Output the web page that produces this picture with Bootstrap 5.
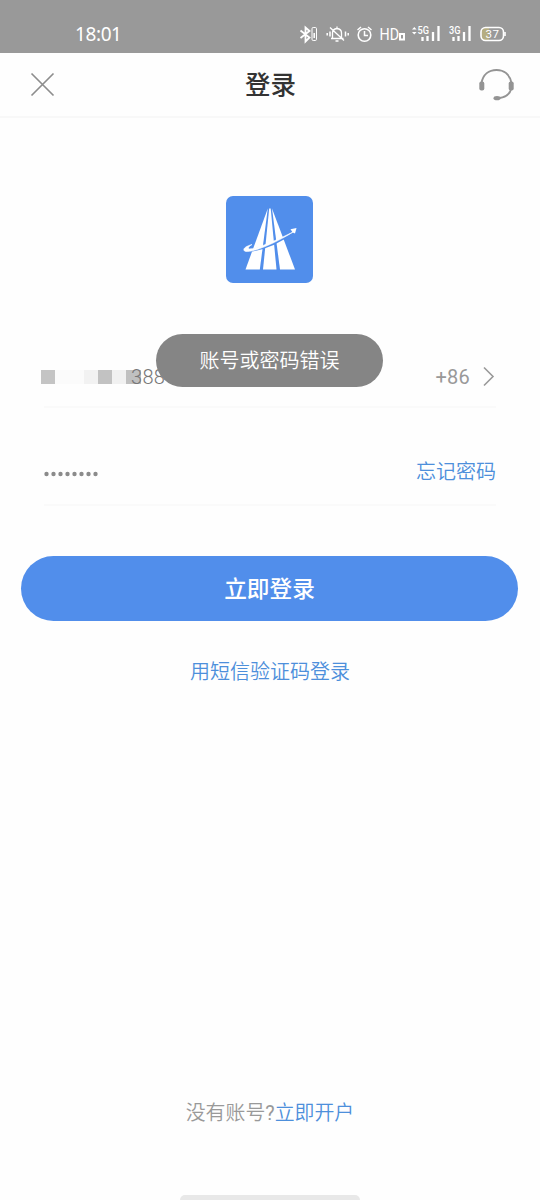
<!DOCTYPE html>
<html lang="zh-CN">
<head>
<meta charset="utf-8">
<meta name="viewport" content="width=device-width, initial-scale=1">
<title>登录</title>
<link href="https://cdn.jsdelivr.net/npm/bootstrap@5.3.0/dist/css/bootstrap.min.css" rel="stylesheet">
<style>
body{font-family:Roboto,"Noto Sans CJK SC",sans-serif;font-size:20px;font-weight:350;line-height:30px;color:#999;background:#fefefe}
.screen{height:1200px;overflow:hidden}
.statusbar{height:53px;background:#999;color:#fff;padding:15px 34px 0 75px}
.clock{font-family:"Noto Sans",Roboto,sans-serif;font-size:19px;font-weight:400;line-height:38px;letter-spacing:-.4px}
.status-icons{height:38px}
.topbar{height:65px;border-bottom:2px solid #f8f8f8;padding:0 25px 0 30px}
.topbar h1{font-size:25.5px;font-weight:500;line-height:38px;color:#333;margin-right:-10px}
.brand-tile{width:87px;height:87px;margin:78px 1px 0 0}
.login-form{margin-top:63px;padding:0 44px}
.field{height:62px;border-bottom:2px solid #fafafa}
.field + .field{height:98px;padding-top:49px}
.dial-code{font-weight:400;letter-spacing:.2px}
.link-blue{color:#4d8fdb;text-decoration:none}
.mask{margin-left:-3px;width:100px;height:14px;background:linear-gradient(90deg,#c4c4c4 14px,#fbfbfb 14px 43px,#f2f2f2 43px 57px,#c2c2c2 57px 71px,#f1f1f1 71px 85px,#c0c0c0 85px)}
.digits{margin-left:-10px;font-weight:300;color:#777;letter-spacing:.3px}
.notice{left:156px;top:334px;width:227px;height:53px;background:#858585;color:#fff;z-index:2}
.login-btn{height:65px;margin:50px 22px 0 21px;padding-top:8px;font-size:22.7px;font-weight:500;line-height:32px;background:#518eeb;color:#fff;border:0}
.sms{margin-top:36px}
.signup{margin-bottom:66px;font-size:19.9px}
.home-bar{width:180px;height:5px;background:#e8e8e8}
</style>
</head>
<body>
<div class="screen d-flex flex-column position-relative">
  <header class="statusbar d-flex justify-content-between">
    <span class="clock">18:01</span>
    <div class="status-icons d-flex align-items-center">
      <svg width="207" height="20" viewBox="299 24 207 20" fill="none" stroke="#fff" stroke-width="1.6">
        <path d="M300.500 30.500l9 7-4 4V27.500l4 3.500-9 7" stroke-width="1.800"/>
        <rect x="312" y="27.500" width="4.500" height="13" rx="1.200" stroke-width="1"/><path d="M314.200 33v5" stroke-width="1.500"/>
        <path d="M331 38.500h12.500M332.500 38v-5q0-4 4.500-4.500 4.500.500 4.500 4.500v5M337 26.500v2M335.500 41h3M330 27.500l14 13" stroke-width="1.300"/>
        <path d="M330 31.500v5M345.500 31.500v5M327.200 33v2.500M348.200 33v2.500" stroke-width="1.500"/>
        <circle cx="364.500" cy="35" r="6.300" stroke-width="1.600"/><path d="M364.500 31v4.500h3.500M357.500 30l3.500-3M371.500 30l-3.500-3" stroke-width="1.500"/>
        <text x="379.500" y="40" font-size="16" font-weight="400" textLength="19.500" lengthAdjust="spacingAndGlyphs" fill="#fff" stroke="none">HD</text>
        <rect x="400" y="34" width="4" height="5.500" stroke-width="2"/>
        <path d="M412 29.500l2.300-2.500 2.300 2.500zM412 32l2.300 2.500 2.300-2.500z" fill="#fff" stroke="none"/>
        <text x="417.500" y="33.500" font-size="10" font-weight="500" textLength="11.500" lengthAdjust="spacingAndGlyphs" fill="#fff" stroke="none">5G</text>
        <path d="M422.500 41v-4M427.500 41v-5M433 41v-9M438.500 41V26" stroke-width="2.300"/>
        <text x="449" y="33.500" font-size="10" font-weight="500" textLength="11.500" lengthAdjust="spacingAndGlyphs" fill="#fff" stroke="none">3G</text>
        <path d="M453.500 41v-4M458.500 41v-5M464 41v-9M469.500 41V26" stroke-width="2.300"/>
        <path d="M485 28h4v12h-4q-3.500 0-3.500-3.500v-5q0-3.500 3.500-3.500z" fill="#b5ad82" stroke="none"/>
        <rect x="481" y="27.500" width="22.500" height="13" rx="4.500"/><path d="M505 32v4"/>
        <text x="485.500" y="38" font-size="11.500" font-weight="400" textLength="13.500" fill="#fff" stroke="none">37</text>
      </svg>
    </div>
  </header>

  <nav class="topbar d-flex align-items-center justify-content-between">
    <svg width="25" height="25" viewBox="0 0 25 25" fill="none" stroke="#8d8d8d" stroke-width="1.700" role="img" aria-label="关闭"><path d="M1.500 1.500l22 22M23.500 1.500l-22 22"/></svg>
    <h1 class="m-0 ms-auto me-auto ps-2">登录</h1>
    <svg width="37" height="34" viewBox="0 0 37 34" fill="none" stroke="#949494" role="img" aria-label="客服">
      <path d="M3.500 15C5 6.500 11 2 18.500 2S32 6.500 33.500 15M33.500 20C32 26 27.500 29.800 20 30.300" stroke-width="1.900"/>
      <rect x="1.300" y="13.500" width="5" height="9" rx="2" fill="#949494" stroke="none"/>
      <rect x="30.700" y="13.500" width="5" height="9" rx="2" fill="#949494" stroke="none"/>
      <ellipse cx="19" cy="30.200" rx="3.500" ry="2.100" fill="#949494" stroke="none"/>
    </svg>
  </nav>

  <svg class="brand-tile align-self-center" viewBox="0 0 87 87" role="img" aria-label="标志">
    <rect width="87" height="87" rx="7" fill="#518eeb"/>
    <g fill="#fff">
      <path d="M41.800 12.500L33.800 73.500H19.500z"/>
      <path d="M43.200 12.500h1.500L50.500 73.500H37z"/>
      <path d="M46 12.500L69 73.500H54z"/>
    </g>
    <path d="M25 54.500C43 51.500 55 45 67 36" fill="none" stroke="#518eeb" stroke-width="2.500"/>
    <path d="M26 48.500C19 50.500 16.500 53 18.500 55C24 58 48 48 68 35.500C52 43.500 31 53 23.500 53C21.500 52.500 22.500 50.500 26 48.500z" fill="#fff" stroke="#fff" stroke-width=".6"/>
    <path d="M64.500 33.200l6-1.200-1.500 5.500-2.500-1.300z" fill="#fff"/>
  </svg>

  <main class="login-form">
    <div class="field d-flex align-items-start">
      <div class="d-flex align-items-center pt-3">
        <div class="mask"></div><span class="digits">388</span>
      </div>
      <div class="d-flex align-items-center ms-auto pt-3">
        <span class="dial-code">+86</span>
        <svg class="ms-2" width="18" height="22" viewBox="0 0 18 22" fill="none" stroke="#999" stroke-width="1.600" aria-hidden="true"><path d="M6 1.500l9 9-9 9"/></svg>
      </div>
    </div>
    <div class="field d-flex align-items-start justify-content-between">
      <svg class="mt-1" width="56" height="30" viewBox="0 2 56 30" fill="#8b8b8b" role="img" aria-label="密码">
        <circle cx="2.500" cy="15" r="2.200"/><circle cx="9.500" cy="15" r="2.200"/><circle cx="16.500" cy="15" r="2.200"/><circle cx="23.500" cy="15" r="2.200"/><circle cx="30.500" cy="15" r="2.200"/><circle cx="37.500" cy="15" r="2.200"/><circle cx="44.500" cy="15" r="2.200"/><circle cx="51.500" cy="15" r="2.200"/>
      </svg>
      <a class="link-blue" href="#">忘记密码</a>
    </div>
  </main>
  <button type="button" class="btn login-btn rounded-pill">立即登录</button>
  <a class="link-blue sms align-self-center" href="#">用短信验证码登录</a>

  <footer class="mt-auto d-flex flex-column align-items-center">
    <div class="signup">没有账号<span class="fw-normal">?</span><a class="link-blue" href="#">立即开户</a></div>
    <div class="home-bar rounded-top"></div>
  </footer>
  <div class="notice position-absolute rounded-pill d-flex align-items-center justify-content-center" role="alert">账号或密码错误</div>
</div>
<script src="https://cdn.jsdelivr.net/npm/bootstrap@5.3.0/dist/js/bootstrap.bundle.min.js"></script>
</body>
</html>
